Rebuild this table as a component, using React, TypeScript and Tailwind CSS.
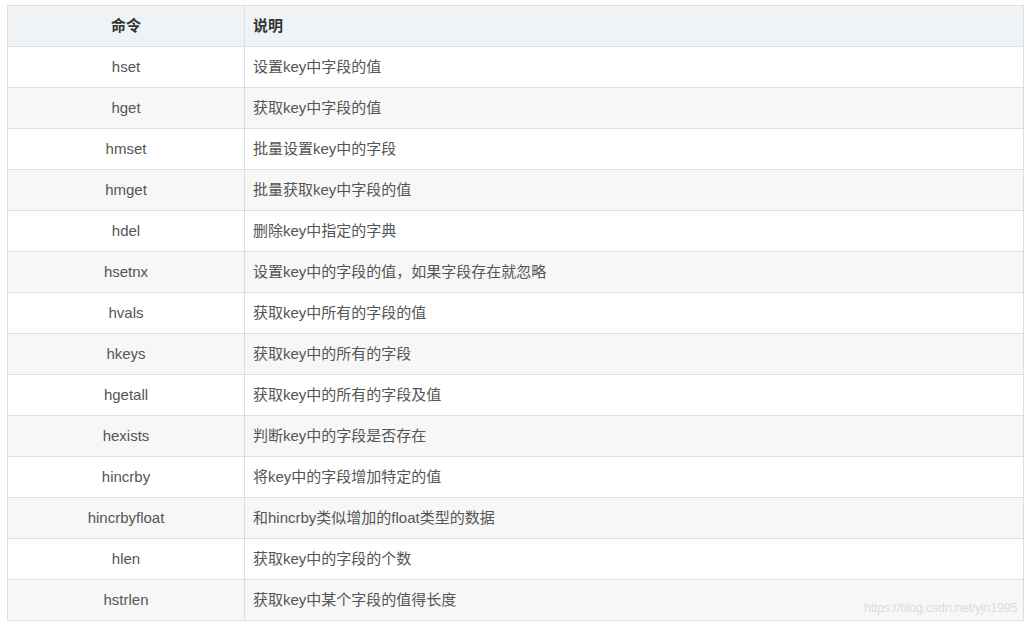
import React from 'react'

const rows = [
  { cmd: "hset", desc: "设置key中字段的值" },
  { cmd: "hget", desc: "获取key中字段的值" },
  { cmd: "hmset", desc: "批量设置key中的字段" },
  { cmd: "hmget", desc: "批量获取key中字段的值" },
  { cmd: "hdel", desc: "删除key中指定的字典" },
  { cmd: "hsetnx", desc: "设置key中的字段的值，如果字段存在就忽略" },
  { cmd: "hvals", desc: "获取key中所有的字段的值" },
  { cmd: "hkeys", desc: "获取key中的所有的字段" },
  { cmd: "hgetall", desc: "获取key中的所有的字段及值" },
  { cmd: "hexists", desc: "判断key中的字段是否存在" },
  { cmd: "hincrby", desc: "将key中的字段增加特定的值" },
  { cmd: "hincrbyfloat", desc: "和hincrby类似增加的float类型的数据" },
  { cmd: "hlen", desc: "获取key中的字段的个数" },
  { cmd: "hstrlen", desc: "获取key中某个字段的值得长度" },
]

export default function App() {
  return (
    <div
      className="relative w-[1024px] h-[622px] bg-white overflow-hidden pt-[5px] pl-[7px]"
      style={{ fontFamily: '"Liberation Sans", "Noto Sans CJK SC", sans-serif' }}
    >
      <table className="w-[1017px] border-collapse text-[15px] text-[#555555] table-fixed">
        <colgroup>
          <col className="w-[237px]" />
          <col />
        </colgroup>
        <thead>
          <tr className="bg-[#eff3f5]">
            <th className="h-[41px] border border-[#dddddd] text-center font-bold text-[#333333] pt-[1px] pb-0 px-0">命令</th>
            <th className="h-[41px] border border-[#dddddd] text-left font-bold text-[#333333] pt-[1px] pb-0 px-2">说明</th>
          </tr>
        </thead>
        <tbody>
          {rows.map((row, index) => (
            <tr key={index} className={index % 2 === 1 ? "bg-[#f7f7f7]" : "bg-white"}>
              <td className="h-[41px] border border-[#dddddd] text-center pt-[1px] pb-0 px-0">{row.cmd}</td>
              <td className="h-[41px] border border-[#dddddd] pt-[1px] pb-0 px-2">{row.desc}</td>
            </tr>
          ))}
        </tbody>
      </table>

      {/* watermark */}
      <div className="absolute left-[864px] top-[599px] text-[12.5px] text-[#dcdcdc] tracking-[-0.2px]">
        https://blog.csdn.net/yjn1995
      </div>
    </div>
  )
}
